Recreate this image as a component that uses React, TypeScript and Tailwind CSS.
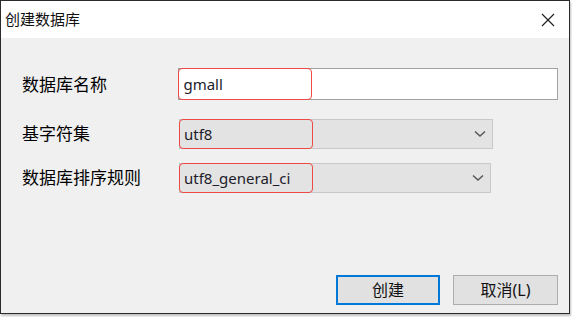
import React from 'react'

const font = { fontFamily: '"Noto Sans", "Noto Sans CJK SC", sans-serif' }

function Chevron() {
  return (
    <svg width="12" height="8" viewBox="0 0 12 8" className="shrink-0">
      <path d="M1 1.5 L6 6 L11 1.5" fill="none" stroke="#555" strokeWidth="1.4" />
    </svg>
  )
}

function Field({ value, select, width }: { value: string; select?: boolean; width: string }) {
  return (
    <div
      className={`flex items-stretch ${width} ${
        select ? 'h-[30px] bg-[#e3e3e3] border border-[#c9c9c9]' : 'h-[32px] bg-white border border-[#a2a2a2]'
      }`}
    >
      {/* 강조 표시 박스 */}
      <div className="w-[134px] -my-px -ml-px flex items-center rounded-[4px] border-[1.5px] border-[#ec4a44] pl-[4px] pt-[1px] text-[15px] text-[#1c1c2a]">
        {value}
      </div>
      <div className="flex-1" />
      {select && (
        <div className="flex items-center pr-[6px]">
          <Chevron />
        </div>
      )}
    </div>
  )
}

export default function App() {
  return (
    <div className="w-[572px] h-[317px] bg-white" style={font}>
      <div className="w-[570px] h-[314px] border border-[#2b2b2b] bg-[#f0f0f0] flex flex-col shadow-[1px_2px_2px_rgba(0,0,0,0.25)]">
        {/* 타이틀 바 */}
        <div className="h-[37px] bg-white flex items-center justify-between pl-[4px] pr-[14px]">
          <span className="text-[15px] text-[#111]">创建数据库</span>
          <svg width="14" height="14" viewBox="0 0 14 14">
            <path d="M1 1 L13 13 M13 1 L1 13" stroke="#222" strokeWidth="1.2" />
          </svg>
        </div>

        {/* 폼 */}
        <div className="flex-1 flex flex-col pt-[30px] pl-[21px] pr-[11px] pb-[8px]">
          <div className="flex items-center">
            <span className="w-[157px] pt-[2px] text-[17px] text-black">数据库名称</span>
            <Field value="gmall" width="w-[381px]" />
          </div>
          <div className="flex items-center mt-[19px]">
            <span className="w-[157px] text-[17px] text-black">基字符集</span>
            <Field value="utf8" select width="w-[314px]" />
          </div>
          <div className="flex items-center mt-[14px]">
            <span className="w-[157px] text-[17px] text-black">数据库排序规则</span>
            <Field value="utf8_general_ci" select width="w-[312px]" />
          </div>

          {/* 버튼 */}
          <div className="mt-auto flex justify-end gap-[13px]">
            <button className="w-[104px] h-[30px] bg-[#e1e1e1] border-2 border-[#0078d7] text-[16px] text-[#111]">
              创建
            </button>
            <button className="w-[105px] h-[30px] bg-[#e1e1e1] border border-[#adadad] text-[16px] text-[#111]">
              取消(L)
            </button>
          </div>
        </div>
      </div>
    </div>
  )
}
